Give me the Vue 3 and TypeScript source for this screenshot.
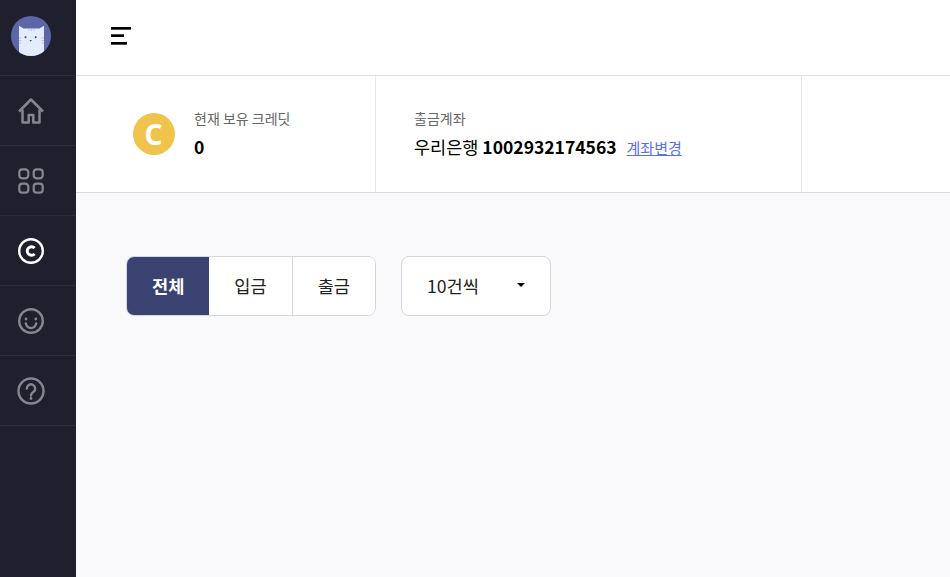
<script setup lang="ts">
const tabs = [
  { label: '전체', active: true },
  { label: '입금', active: false },
  { label: '출금', active: false },
]
</script>

<template>
  <div class="layout">
    <aside class="sidebar">
      <div class="side-item logo-item">
        <svg class="logo" width="40" height="40" viewBox="0 0 40 40">
          <defs>
            <clipPath id="logo-clip"><circle cx="20" cy="20" r="20" /></clipPath>
          </defs>
          <circle cx="20" cy="20" r="20" fill="#5d66a6" />
          <g clip-path="url(#logo-clip)">
            <path d="M8 9.700l4.500 2.800h16L33 9.700V42H8z" fill="#e2ecfb" />
            <circle cx="14.500" cy="21.300" r="1" fill="#3a4272" />
            <circle cx="24.700" cy="21.300" r="1" fill="#3a4272" />
            <path d="M18.500 24h2.400l-1.200 1.800z" fill="#3a4272" />
            <path d="M8 22h2.500M8 24.500h2.500M8 27h2.500M30.500 22H33M30.500 24.500H33M30.500 27H33" stroke="#aab6d8" stroke-width=".7" />
            <path d="M18 12.500v2M20.500 12.500v2.500M23 12.500v2" stroke="#aab6d8" stroke-width=".7" />
          </g>
        </svg>
      </div>
      <div class="side-item">
        <svg width="28" height="28" viewBox="0 0 28 28" fill="none" stroke="#86868f" stroke-width="2.500" stroke-linejoin="round">
          <path d="M2 14.500 14 2.500l12 12" />
          <path d="M5.500 12.500V25.500h6.200V18h4.600v7.500h6.200V12.500" />
        </svg>
      </div>
      <div class="side-item">
        <svg width="28" height="28" viewBox="0 0 28 28" fill="none" stroke="#86868f" stroke-width="2.200">
          <rect x="2.300" y="2.300" width="9" height="9" rx="3" />
          <rect x="16.700" y="2.300" width="9" height="9" rx="3" />
          <rect x="2.300" y="16.700" width="9" height="9" rx="3" />
          <rect x="16.700" y="16.700" width="9" height="9" rx="3" />
        </svg>
      </div>
      <div class="side-item">
        <svg width="28" height="28" viewBox="0 0 28 28" fill="none" stroke="#fff">
          <circle cx="14" cy="14" r="11.800" stroke-width="2.400" />
          <path d="M17.600 11a4.300 4.300 0 1 0 0 6" stroke-width="2.900" />
        </svg>
      </div>
      <div class="side-item">
        <svg width="28" height="28" viewBox="0 0 28 28" fill="none" stroke="#86868f" stroke-width="2.400">
          <circle cx="14" cy="14" r="11.800" />
          <path d="M8.800 16.500c.8 3 2.800 4.500 5.200 4.500s4.400-1.500 5.200-4.500" stroke-linecap="round" />
          <circle cx="9" cy="12" r="1.400" fill="#86868f" stroke="none" />
          <circle cx="18.800" cy="12" r="1.400" fill="#86868f" stroke="none" />
        </svg>
      </div>
      <div class="side-item">
        <svg width="28" height="28" viewBox="0 0 28 28" fill="none" stroke="#86868f" stroke-width="2.400">
          <circle cx="14" cy="14" r="12.500" />
          <path d="M9.800 11.500a4.200 4.200 0 1 1 6.800 3.300c-1.500 1-2.600 1.800-2.600 3.700" stroke-linecap="round" />
          <circle cx="14" cy="21.500" r="1.400" fill="#86868f" stroke="none" />
        </svg>
      </div>
    </aside>

    <div class="main">
      <header class="topbar">
        <button class="menu-btn" type="button" aria-label="menu">
          <svg width="20" height="20" viewBox="0 0 20 20" fill="#000">
            <rect x="0" y="1" width="20" height="2.700" />
            <rect x="0" y="8.300" width="13" height="2.700" />
            <rect x="0" y="16" width="16" height="2.700" />
          </svg>
        </button>
      </header>

      <section class="summary">
        <div class="cell credit-cell">
          <div class="coin">C</div>
          <div>
            <div class="cell-label">현재 보유 크레딧</div>
            <div class="cell-value"><strong>0</strong></div>
          </div>
        </div>
        <div class="cell account-cell">
          <div>
            <div class="cell-label">출금계좌</div>
            <div class="cell-value">우리은행 <strong>1002932174563</strong><a class="change-link" href="#">계좌변경</a></div>
          </div>
        </div>
        <div class="cell rest-cell"></div>
      </section>

      <section class="content">
        <div class="filters">
          <div class="tabs">
            <button v-for="tab in tabs" :key="tab.label" class="tab" :class="{ active: tab.active }" type="button">{{ tab.label }}</button>
          </div>
          <div class="select">
            <span>10건씩</span>
            <span class="caret"></span>
          </div>
        </div>
      </section>
    </div>
  </div>
</template>

<style>
html,
body {
  margin: 0;
  height: 100%;
}

#app {
  height: 100%;
}
</style>

<style scoped>
.layout {
  display: flex;
  height: 577px;
  overflow: hidden;
  font-family: 'Noto Sans CJK KR', 'Noto Sans', sans-serif;
  color: #000;
}

.sidebar {
  flex: 0 0 76px;
  background: #1f1f2d;
}

.side-item {
  display: flex;
  align-items: center;
  justify-content: center;
  height: 69px;
  padding-right: 14px;
  border-bottom: 1px solid #2b2b3d;
}

.logo-item {
  height: 75px;
}

.logo {
  margin-bottom: 4px;
}

.main {
  display: flex;
  flex: 1;
  flex-direction: column;
  min-width: 0;
}

.topbar {
  display: flex;
  flex: 0 0 75px;
  align-items: center;
  padding-left: 35px;
  background: #fff;
  border-bottom: 1px solid #ddd;
}

.menu-btn {
  display: flex;
  padding: 0;
  margin-bottom: 3px;
  background: none;
  border: none;
}

.summary {
  display: flex;
  flex: 0 0 116px;
  background: #fff;
  border-bottom: 1px solid #ddd;
}

.cell {
  display: flex;
  align-items: center;
  border-right: 1px solid #e8e8e8;
}

.credit-cell {
  flex: 0 0 300px;
  gap: 19px;
  padding-left: 57px;
  box-sizing: border-box;
}

.account-cell {
  flex: 0 0 426px;
  padding-left: 38px;
  box-sizing: border-box;
}

.rest-cell {
  flex: 1;
  border-right: none;
}

.coin {
  display: flex;
  flex: 0 0 42px;
  align-items: center;
  justify-content: center;
  height: 42px;
  padding-right: 1px;
  box-sizing: border-box;
  font-family: 'Noto Sans', sans-serif;
  font-size: 28px;
  font-weight: 700;
  color: #fff;
  background: #f0c44c;
  border-radius: 50%;
}

.cell-label {
  font-size: 14px;
  line-height: 19px;
  color: #666;
}

.cell-value {
  margin-top: 6px;
  font-size: 17.500px;
  line-height: 25px;
  white-space: nowrap;
}

.change-link {
  margin-left: 10px;
  font-size: 15px;
  color: #5a6ff0;
}

.content {
  flex: 1;
  padding: 63px 50px;
  background: #f9f9fb;
}

.filters {
  display: flex;
  gap: 25px;
}

.tabs {
  display: flex;
  width: 250px;
  height: 60px;
  box-sizing: border-box;
  overflow: hidden;
  background: #fff;
  border: 1px solid #d3d6e3;
  border-radius: 8px;
}

.tab {
  flex: 1;
  padding: 0 0 2px;
  font-family: inherit;
  font-size: 17.600px;
  color: #222;
  background: #fff;
  border: none;
  border-right: 1px solid #d3d6e3;
}

.tab:last-child {
  border-right: none;
}

.tab.active {
  font-weight: 700;
  color: #fff;
  background: #3a4272;
  border-right: none;
}

.select {
  display: flex;
  align-items: center;
  justify-content: space-between;
  width: 150px;
  height: 60px;
  box-sizing: border-box;
  padding: 0 25px 2px;
  font-size: 17.600px;
  color: #222;
  background: #fff;
  border: 1px solid #d3d6e3;
  border-radius: 8px;
}

.caret {
  width: 0;
  height: 0;
  border-top: 4px solid #000;
  border-right: 4px solid transparent;
  border-left: 4px solid transparent;
}
</style>
